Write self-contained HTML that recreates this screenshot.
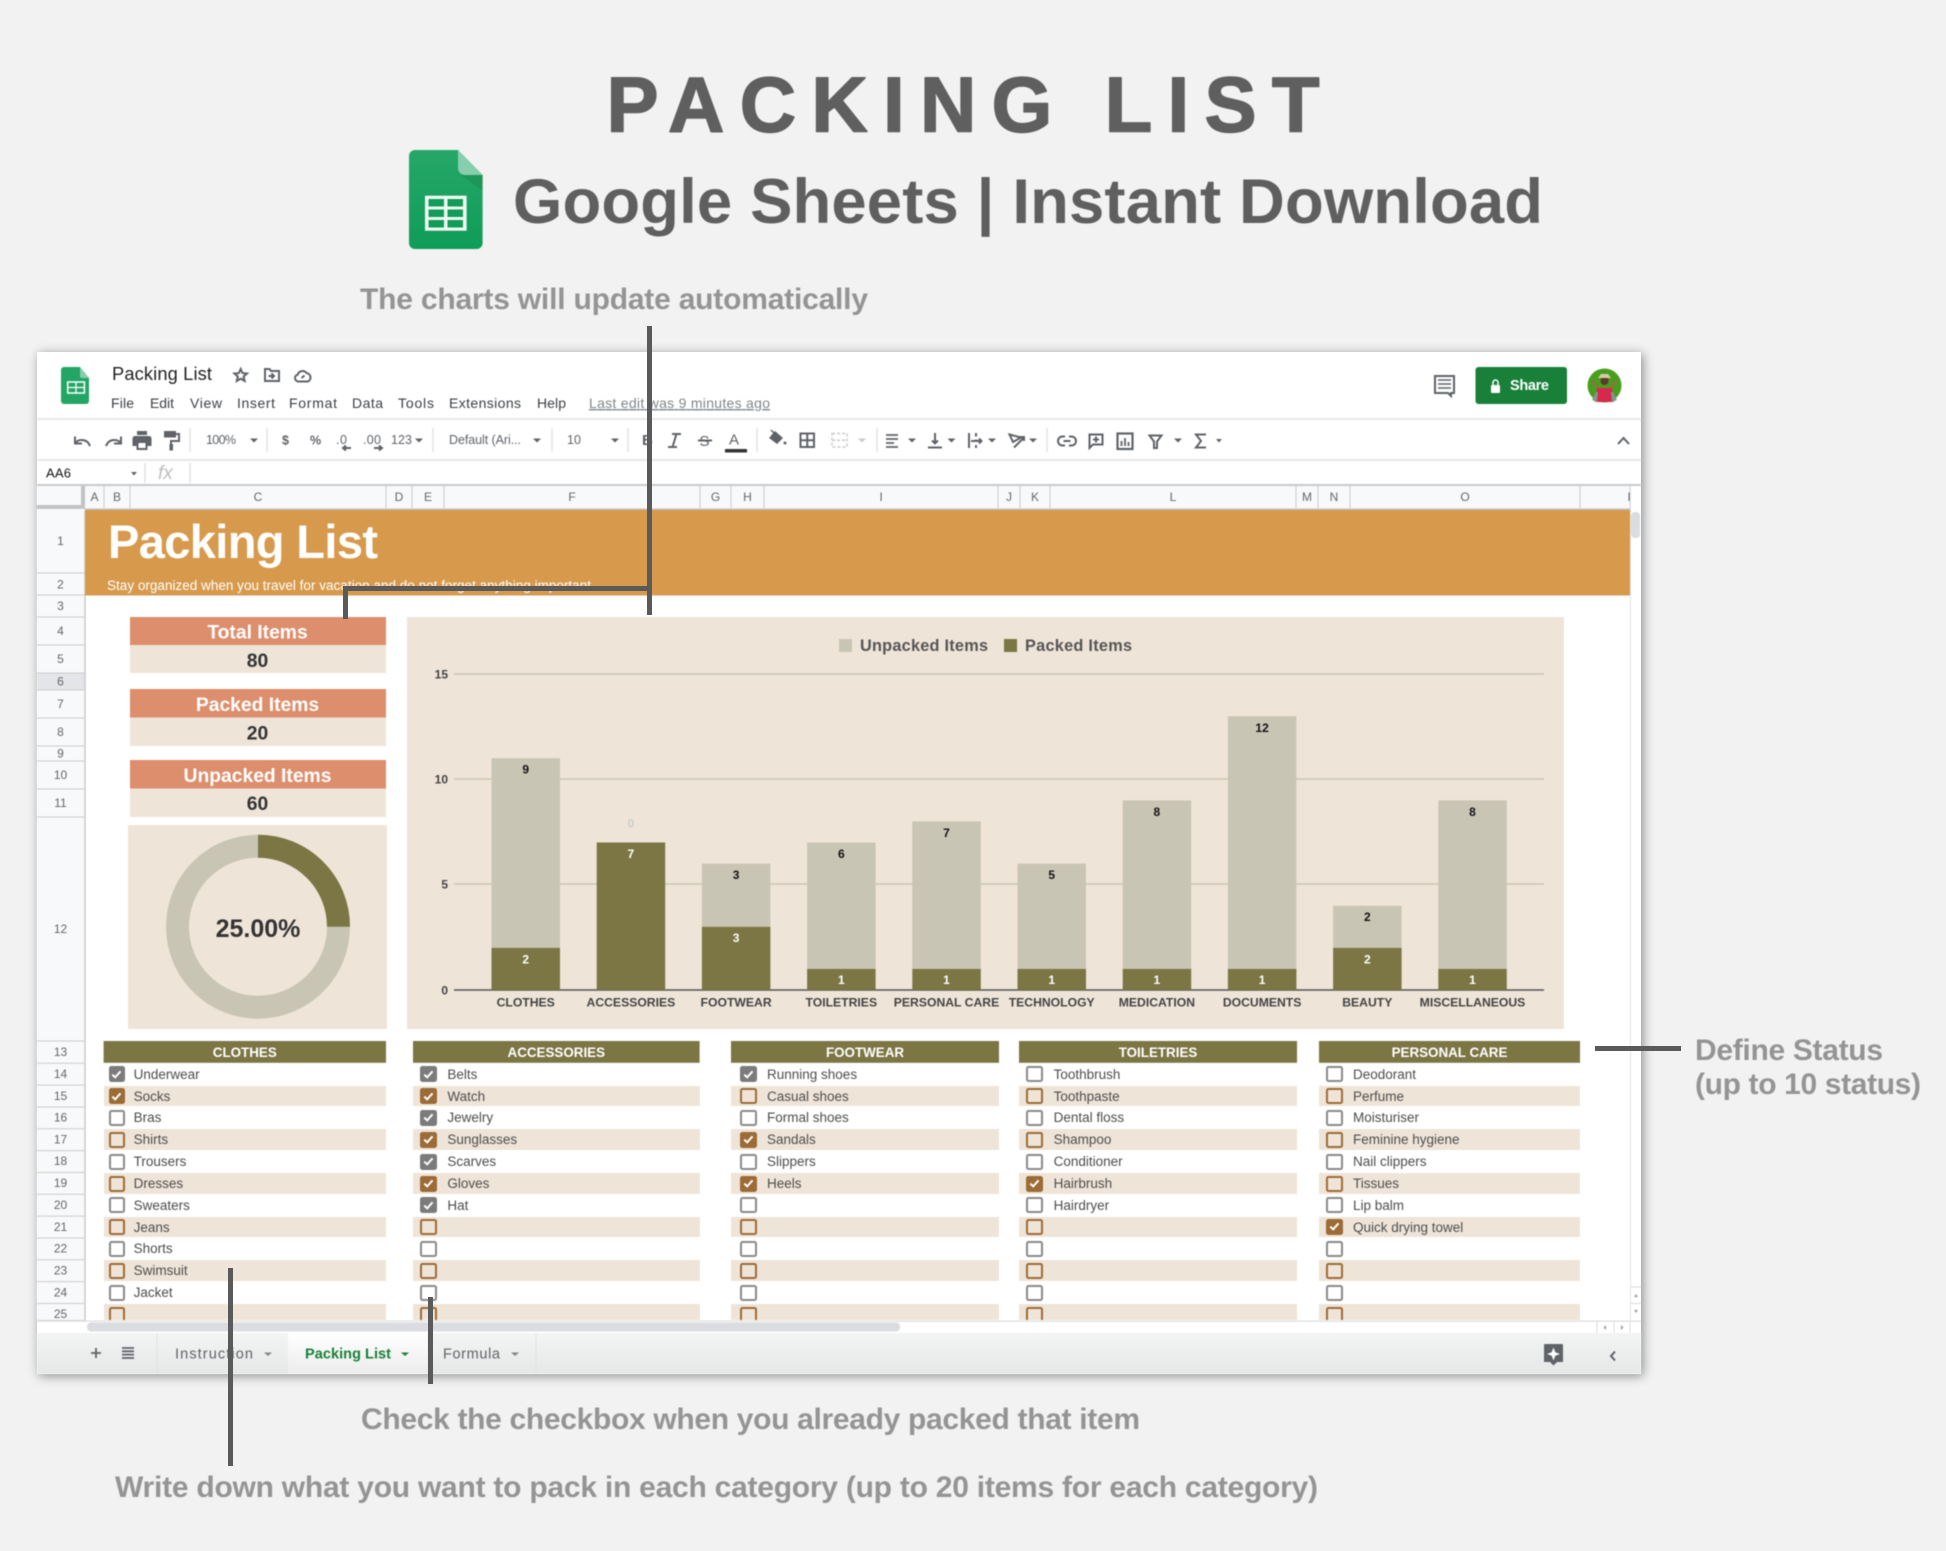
<!DOCTYPE html>
<html lang="en"><head><meta charset="utf-8"><title>Packing List</title>
<style>
html,body{margin:0;padding:0}
body{width:1946px;height:1551px;background:#f2f2f2;position:relative;overflow:hidden;font-family:"Liberation Sans",sans-serif}
#w{position:absolute;left:37px;top:352px;width:1604px;height:1022px;background:#fff;box-shadow:2px 2px 10px rgba(0,0,0,.42)}
#s{position:absolute;left:0;top:0;filter:blur(.45px)}
text{font-family:"Liberation Sans",sans-serif}
.t{font-size:14px;fill:#3c4043}
.h{font-size:12px;fill:#666;text-anchor:middle}
.tb{font-size:12.5px;fill:#5f6368}
.b{font-size:12px;font-weight:bold;text-anchor:middle}
.x{font-size:12.2px;font-weight:bold;fill:#444;text-anchor:middle}
.an{font-size:30px;font-weight:bold;fill:#949494}
.ic{fill:none;stroke:#5f6368;stroke-width:2}
.f{fill:#5f6368}
.l{position:absolute;top:1063.8px;height:256.7px;overflow:hidden;font-size:13.5px;color:#4d4d4d;filter:blur(.4px)}
.l div{height:21.83px;box-sizing:border-box;line-height:22.6px;position:relative;padding-left:var(--t);white-space:nowrap}
.l div:nth-child(even){background:#efe4d8;border-bottom:1px solid #fff}
.l i{position:absolute;left:var(--c);top:2.6px;width:16.5px;height:16px;box-sizing:border-box;border:2px solid #8a8a8a;border-radius:2.5px;background:#fff}
.l div:nth-child(even) i{border-color:#9c6b36;background:transparent}
.l i.k{background:#7b7b7b;border-color:#7b7b7b}
.l div:nth-child(even) i.k{background:#9c6b36}
.l i.k::after{content:"";position:absolute;left:3.7px;top:.3px;width:4.5px;height:9px;box-sizing:border-box;border:solid #fff;border-width:0 2px 2px 0;transform:rotate(42deg)}
.a{position:absolute;background:#5a5a5a;z-index:5}
</style></head><body>
<div id="w"></div>
<svg id="s" width="1946" height="1551" viewBox="0 0 1946 1551">
<defs>
<linearGradient id="g1" x1="0" y1="0" x2="0" y2="1"><stop offset="0" stop-color="#26a768"/><stop offset="1" stop-color="#0f9d58"/></linearGradient>
<linearGradient id="g2" x1="0" y1="0" x2="0" y2="1"><stop offset="0" stop-color="#f3f4f4"/><stop offset="1" stop-color="#e6e7e7"/></linearGradient>
<linearGradient id="g3" x1="0" y1="0" x2="0" y2="1"><stop offset="0" stop-color="#fff"/><stop offset="1" stop-color="#ececec"/></linearGradient>
</defs>

<!-- headline -->
<text x="606.500" y="131.500" font-size="78" font-weight="bold" fill="#5f5f5f" stroke="#5f5f5f" stroke-width="1.500" stroke-linejoin="round" textLength="713" lengthAdjust="spacing">PACKING LIST</text>
<text x="513" y="223" font-size="63.400" font-weight="bold" fill="#5f5f5f" textLength="1030" lengthAdjust="spacing">Google Sheets | Instant Download</text>
<!-- big logo -->
<path d="M415 150H458L482.600 175V243a6 6 0 0 1-6 6H415a6 6 0 0 1-6-6V156a6 6 0 0 1 6-6z" fill="url(#g1)"/>
<path d="M458 150L482.600 175H465a7 7 0 0 1-7-7z" fill="#87ceac"/>
<path d="M460 175H482.600V190z" fill="#1c8e52" opacity=".6"/>
<rect x="425" y="195.700" width="41.600" height="35" fill="#f1f8f4"/>
<g fill="#0f9d58"><rect x="428.500" y="199" width="15.500" height="7.500"/><rect x="447.500" y="199" width="15.500" height="7.500"/><rect x="428.500" y="209.500" width="15.500" height="7.500"/><rect x="447.500" y="209.500" width="15.500" height="7.500"/><rect x="428.500" y="220" width="15.500" height="7.500"/><rect x="447.500" y="220" width="15.500" height="7.500"/></g>

<text class="an" x="360" y="309" textLength="508" lengthAdjust="spacing">The charts will update automatically</text>
<text class="an" x="361" y="1429" textLength="779" lengthAdjust="spacing">Check the checkbox when you already packed that item</text>
<text class="an" x="115" y="1497" textLength="1203" lengthAdjust="spacing">Write down what you want to pack in each category (up to 20 items for each category)</text>
<text class="an" x="1695" y="1060" textLength="188" lengthAdjust="spacing">Define Status</text>
<text class="an" x="1695" y="1094" textLength="226" lengthAdjust="spacing">(up to 10 status)</text>

<!-- title bar -->
<path d="M64 367H80L89 378V401a3 3 0 0 1-3 3H64a3 3 0 0 1-3-3V370a3 3 0 0 1 3-3z" fill="#23a566"/>
<path d="M80 367L89 378H82a2 2 0 0 1-2-2z" fill="#87ceac"/>
<rect x="67.700" y="382" width="16.700" height="11" fill="none" stroke="#fff" stroke-width="1.500"/>
<path d="M76 382v11M67.700 387.500h16.700" stroke="#fff" stroke-width="1.300"/>
<text x="112" y="380" font-size="18.300" fill="#202124" textLength="100" lengthAdjust="spacing">Packing List</text>
<path d="M240.700 369l1.800 4.100 4.500.400-3.400 3 1 4.400-3.900-2.300-3.900 2.300 1-4.400-3.400-3 4.500-.400z" class="ic" stroke-width="1.300"/>
<path d="M265 369h4.500l1.500 2h8v10h-14z" class="ic" stroke-width="1.500"/><path d="M268.500 376h5.500M271.500 373.500l2.500 2.500-2.500 2.500" class="ic" stroke-width="1.300"/>
<path d="M298.500 381.500a3.500 3.500 0 0 1-.8-6.900 5 5 0 0 1 8.800-1.600 4.500 4.500 0 0 1 1.500 8.500z" class="ic" stroke-width="1.500"/><path d="M301.500 378l3-2.500" class="ic" stroke-width="1.200"/>
<g class="t">
<text class="t" x="111" y="408" textLength="23">File</text>
<text class="t" x="150" y="408" textLength="24">Edit</text>
<text class="t" x="190" y="408" textLength="32">View</text>
<text class="t" x="237" y="408" textLength="38">Insert</text>
<text class="t" x="289" y="408" textLength="48">Format</text>
<text class="t" x="352" y="408" textLength="31">Data</text>
<text class="t" x="398" y="408" textLength="36">Tools</text>
<text class="t" x="449" y="408" textLength="72">Extensions</text>
<text class="t" x="537" y="408" textLength="29">Help</text>
</g>
<text x="589" y="408" font-size="14" fill="#80868b" textLength="181" text-decoration="underline">Last edit was 9 minutes ago</text>

<!-- top right -->
<path d="M1435 376h19v17h-3v3l-3-3h-13z" fill="#fff" stroke="#5f6368" stroke-width="2"/>
<path d="M1438 380h13M1438 384h13M1438 388h13" stroke="#5f6368" stroke-width="1.500"/>
<rect x="1475.500" y="367" width="91.500" height="37" rx="3" fill="#188038"/>
<rect x="1491" y="385" width="9" height="8" rx="1" fill="#fff"/><path d="M1493 385v-2.500a2.500 2.500 0 0 1 5 0v2.500" fill="none" stroke="#fff" stroke-width="1.500"/>
<text x="1510" y="390" font-size="14.500" font-weight="bold" fill="#fff" textLength="39">Share</text>
<circle cx="1604.500" cy="385.500" r="17" fill="#4a9e1f"/>
<path d="M1598 388l-6-8M1611 388l6-8" stroke="#9b6a4a" stroke-width="2"/>
<path d="M1597 388h15l2 14h-19z" fill="#d9274f"/>
<path d="M1592 400l4-8h2l-1 10zM1617 400l-4-8h-2l1 10z" fill="#7f9a8a"/>
<circle cx="1604.500" cy="381" r="4" fill="#5a3a2a"/><path d="M1598 378h13l-3-4h-7z" fill="#d8c9a8"/>

<!-- bars/separators -->
<rect x="37" y="418" width="1604" height="2" fill="#e6e7e8"/>
<rect x="37" y="459" width="1604" height="2" fill="#e6e7e8"/>
<rect x="37" y="484" width="1604" height="2" fill="#c8c9cb"/>
<g stroke="#e3e4e6" stroke-width="1.500"><path d="M190 428v24M267 428v24M433 428v24M552 428v24M628 428v24M757 428v24M877 428v24M1047 428v24"/></g>

<!-- toolbar left -->
<path d="M90 446c-1.500-4-4.500-6-8.500-6-2.500 0-4.500 1-6 2.500" class="ic" stroke-width="2.400"/><path d="M75 436.500v7h7" class="ic" stroke-width="2.400"/>
<path d="M106 446c1.500-4 4.500-6 8.500-6 2.500 0 4.500 1 6 2.500" class="ic" stroke-width="2.400"/><path d="M121 436.500v7h-7" class="ic" stroke-width="2.400"/>
<path d="M137 431h10v4h-10zM135 436h14a2.500 2.500 0 0 1 2.500 2.500v7.500h-4v4h-11v-4h-4v-7.500a2.500 2.500 0 0 1 2.500-2.500z" class="f"/><rect x="138.500" y="443" width="7" height="5" fill="#fff"/>
<path d="M164 431h12v6.500h-12z" class="f"/><path d="M176 434h3v7h-8v3" class="ic"/><rect x="169.500" y="444" width="3.500" height="6.500" class="f"/>
<text class="tb" x="206" y="444" textLength="30">100%</text>
<path d="M250 438.500h8l-4 4z" class="f"/>
<text class="tb" x="282" y="444.500" font-weight="bold">$</text>
<text class="tb" x="310" y="444.500" font-weight="bold" font-size="11.500">%</text>
<text class="tb" x="336" y="444" textLength="11">.0</text><path d="M351 448h-8M346 445.500l-3 2.500 3 2.500" class="ic" stroke-width="1.300"/>
<text class="tb" x="363" y="444" textLength="18">.00</text><path d="M374 448h8M379 445.500l3 2.500-3 2.500" class="ic" stroke-width="1.300"/>
<text class="tb" x="391" y="444" textLength="21">123</text><path d="M415 438.500h8l-4 4z" class="f"/>
<text class="tb" x="449" y="444" textLength="72">Default (Ari...</text><path d="M533 438.500h8l-4 4z" class="f"/>
<text class="tb" x="567" y="444" textLength="14">10</text><path d="M611 438.500h8l-4 4z" class="f"/>
<text x="642" y="445" font-size="15" font-weight="bold" fill="#5f6368">B</text>
<path d="M672 434h9M668 447h9M676.500 434l-4 13" class="ic" stroke-width="1.800"/>
<path d="M698 440.500h14" class="ic" stroke-width="1.500"/>
<text x="699.500" y="446" font-size="15" fill="#5f6368">S</text>
<text x="729" y="444.500" font-size="15" fill="#5f6368">A</text><rect x="725" y="449" width="22" height="3.500" fill="#333"/>
<path d="M775 431l8 7-6 6-8-6zM770 438h12" fill="#5f6368"/><path d="M771 430l3 3" stroke="#5f6368" stroke-width="1.500"/><circle cx="785" cy="443" r="1.500" fill="#5f6368"/>
<rect x="800.500" y="433.500" width="13.500" height="13.500" class="ic"/><path d="M807.250 433.500v13.500M800.500 440.250h13.500" class="ic"/>
<rect x="832" y="433.500" width="15" height="13.500" fill="none" stroke="#c9cbce" stroke-width="1.500" stroke-dasharray="3 2"/><path d="M832 440.250h15" stroke="#c9cbce" stroke-width="1.500" stroke-dasharray="3 2"/>
<path d="M858 438.500h8l-4 4z" fill="#c9cbce"/>
<path d="M886 435h12M886 439h12M886 443h8M886 447h12" stroke="#5f6368" stroke-width="1.800"/><path d="M908 438.500h8l-4 4z" class="f"/>
<path d="M935 433v10M932 440.500l3 3 3-3M928 447.500h14" class="ic" stroke-width="1.700"/><path d="M947.500 438.500h8l-4 4z" class="f"/>
<path d="M969 433v15M976 433v3.500M976 439.500v2M976 445v3M971 441h10M979 438.500l2.500 2.500-2.500 2.500" class="ic" stroke-width="1.500"/><path d="M988 438.500h8l-4 4z" class="f"/>
<path d="M1009.500 434.500l11.500 3-8 4.500zM1014 447.500l10-10M1024 441v-4h-4" class="ic" stroke-width="1.500"/><path d="M1029 438.500h8l-4 4z" class="f"/>
<!-- toolbar right -->
<path d="M1065 436.500h-2.500a4.500 4.500 0 0 0 0 9h2.500M1069 436.500h2.500a4.500 4.500 0 0 1 0 9h-2.500M1063.500 441h7" class="ic" stroke-width="1.900"/>
<path d="M1089.500 434.500h13v10h-9.500l-3.500 3.500zM1096 436.500v6M1093 439.500h6" class="ic" stroke-width="1.400"/>
<rect x="1117.500" y="433.500" width="15" height="15.500" fill="none" stroke="#5f6368" stroke-width="2.200"/><path d="M1121.500 441v5M1125 438v8M1128.500 442v4" stroke="#5f6368" stroke-width="1.800"/>
<path d="M1149.500 435.500h12l-4.500 6v6.500h-3v-6.500z" class="ic" stroke-width="1.500"/><path d="M1174 438.500h8l-4 4z" class="f"/>
<path d="M1206 434.500h-10l5 6.500-5 6.500h10" class="ic" stroke-width="1.800"/><path d="M1216 439h6l-3 3.500z" class="f"/>
<path d="M1618 444l5.500-6 5.500 6" class="ic" stroke-width="2"/>

<!-- formula bar -->
<text x="46" y="477.500" font-size="13" fill="#111" textLength="25">AA6</text>
<path d="M131 472h6l-3 3.500z" class="f"/>
<path d="M145 463v20M190 463v20" stroke="#dfe0e2" stroke-width="1.500"/>
<text x="158" y="479" font-size="19" font-style="italic" font-family="Liberation Serif" fill="#bdbdbd">fx</text>

<!-- column header -->
<rect x="37" y="486" width="1593" height="23.500" fill="#f8f9fa"/>
<rect x="81" y="486" width="4" height="24" fill="#c2c3c5"/>
<rect x="37" y="505" width="48" height="4" fill="#c2c3c5"/>
<rect x="37" y="509" width="48" height="2" fill="#fff"/>
<rect x="85" y="508.500" width="1545" height="1.500" fill="#c0c0c0"/>
<path d="M104 486v23M130 486v23M386 486v23M412 486v23M444 486v23M700 486v23M731 486v23M764 486v23M998 486v23M1020 486v23M1050 486v23M1296 486v23M1318 486v23M1350 486v23M1580 486v23M1630 486v23" stroke="#ccc" stroke-width="1"/>
<g>
<text class="h" x="94.500" y="501">A</text><text class="h" x="117" y="501">B</text><text class="h" x="258" y="501">C</text><text class="h" x="399" y="501">D</text><text class="h" x="428" y="501">E</text><text class="h" x="572" y="501">F</text><text class="h" x="715.500" y="501">G</text><text class="h" x="747.500" y="501">H</text><text class="h" x="881" y="501">I</text><text class="h" x="1009" y="501">J</text><text class="h" x="1035" y="501">K</text><text class="h" x="1173" y="501">L</text><text class="h" x="1307" y="501">M</text><text class="h" x="1334" y="501">N</text><text class="h" x="1465" y="501">O</text><text class="h" x="1629" y="501">I</text>
</g>

<!-- row header -->
<rect x="37" y="510" width="48" height="811" fill="#f8f9fa"/>
<rect x="37" y="673" width="48" height="17" fill="#e3e5e8"/>
<path d="M85 510v811" stroke="#ccc" stroke-width="1.500"/>
<path d="M37 573h48M37 595h48M37 617h48M37 645h48M37 673h48M37 690h48M37 718h48M37 746h48M37 761h48M37 789h48M37 817h48M37 1041h48M37 1063.300h48M37 1085.100h48M37 1107h48M37 1128.800h48M37 1150.600h48M37 1172.500h48M37 1194.300h48M37 1216.100h48M37 1238h48M37 1259.800h48M37 1281.600h48M37 1303.500h48M37 1320.500h48" stroke="#ccc" stroke-width="1"/>
<g>
<text class="h" x="60.500" y="545">1</text><text class="h" x="60.500" y="588.500">2</text><text class="h" x="60.500" y="610">3</text><text class="h" x="60.500" y="635">4</text><text class="h" x="60.500" y="663">5</text><text class="h" x="60.500" y="685.500">6</text><text class="h" x="60.500" y="708">7</text><text class="h" x="60.500" y="736">8</text><text class="h" x="60.500" y="757.500">9</text><text class="h" x="60.500" y="779">10</text><text class="h" x="60.500" y="807">11</text><text class="h" x="60.500" y="933">12</text><text class="h" x="60.500" y="1056">13</text><text class="h" x="60.500" y="1078">14</text><text class="h" x="60.500" y="1100">15</text><text class="h" x="60.500" y="1121.500">16</text><text class="h" x="60.500" y="1143.500">17</text><text class="h" x="60.500" y="1165">18</text><text class="h" x="60.500" y="1187">19</text><text class="h" x="60.500" y="1209">20</text><text class="h" x="60.500" y="1231">21</text><text class="h" x="60.500" y="1252.500">22</text><text class="h" x="60.500" y="1274.500">23</text><text class="h" x="60.500" y="1296.500">24</text><text class="h" x="60.500" y="1318">25</text>
</g>

<!-- orange banner -->
<rect x="85" y="510" width="1545" height="85.500" fill="#d79a4c"/>
<text x="108" y="558" font-size="47" font-weight="bold" fill="#fff" textLength="270" lengthAdjust="spacing">Packing List</text>
<text x="107" y="590" font-size="13.500" fill="#fff" textLength="484" lengthAdjust="spacing">Stay organized when you travel for vacation and do not forget anything important</text>

<!-- stats -->
<rect x="130" y="617" width="256" height="28" fill="#dd8e6c"/><rect x="130" y="645" width="256" height="28" fill="#efe4d8"/>
<rect x="130" y="689" width="256" height="28.500" fill="#dd8e6c"/><rect x="130" y="717.500" width="256" height="28.500" fill="#efe4d8"/>
<rect x="130" y="760" width="256" height="28.500" fill="#dd8e6c"/><rect x="130" y="788.500" width="256" height="28.500" fill="#efe4d8"/>
<g font-size="19.300" font-weight="bold" text-anchor="middle">
<text x="257.500" y="638.500" fill="#fff">Total Items</text><text x="257.500" y="667" fill="#333">80</text>
<text x="257.500" y="711" fill="#fff">Packed Items</text><text x="257.500" y="739.500" fill="#333">20</text>
<text x="257.500" y="782" fill="#fff">Unpacked Items</text><text x="257.500" y="810" fill="#333">60</text>
</g>
<rect x="128" y="825" width="259" height="204" fill="#efe4d8"/>
<circle cx="258" cy="926.700" r="80.500" fill="none" stroke="#c9c5b5" stroke-width="23"/>
<path d="M258 846.200A80.500 80.500 0 0 1 338.500 926.700" fill="none" stroke="#7c7644" stroke-width="23"/>
<text x="258" y="937" font-size="25" font-weight="bold" fill="#333" text-anchor="middle">25.00%</text>

<!-- chart -->
<rect x="407" y="617" width="1157" height="412" fill="#efe4d8"/>
<path d="M454 674h1090M454 779h1090M454 884h1090" stroke="#c9c5b5" stroke-width="1.500"/>
<path d="M454 990h1090" stroke="#555" stroke-width="1.500"/>
<g font-size="12" font-weight="bold" fill="#444" text-anchor="end"><text x="448" y="678.500">15</text><text x="448" y="783.500">10</text><text x="448" y="888.500">5</text><text x="448" y="994.500">0</text></g>
<rect x="839" y="639" width="13" height="13" fill="#c9c5b5"/><text x="860" y="651" font-size="16.300" font-weight="bold" fill="#555" textLength="128">Unpacked Items</text>
<rect x="1004" y="639" width="13" height="13" fill="#7c7644"/><text x="1025" y="651" font-size="16.300" font-weight="bold" fill="#555" textLength="107">Packed Items</text>
<g fill="#c9c5b5">
<rect x="491.500" y="758.200" width="68.500" height="189.700"/><rect x="701.900" y="863.600" width="68.500" height="63.200"/><rect x="807.100" y="842.500" width="68.500" height="126.400"/><rect x="912.300" y="821.400" width="68.500" height="147.500"/><rect x="1017.500" y="863.600" width="68.500" height="105.300"/><rect x="1122.700" y="800.400" width="68.500" height="168.500"/><rect x="1227.900" y="716.200" width="68.500" height="252.700"/><rect x="1333.100" y="905.800" width="68.500" height="42.100"/><rect x="1438.300" y="800.400" width="68.500" height="168.500"/>
</g>
<g fill="#7c7644">
<rect x="491.500" y="947.900" width="68.500" height="42.100"/><rect x="596.700" y="842.500" width="68.500" height="147.500"/><rect x="701.900" y="926.800" width="68.500" height="63.200"/><rect x="807.100" y="968.900" width="68.500" height="21.100"/><rect x="912.300" y="968.900" width="68.500" height="21.100"/><rect x="1017.500" y="968.900" width="68.500" height="21.100"/><rect x="1122.700" y="968.900" width="68.500" height="21.100"/><rect x="1227.900" y="968.900" width="68.500" height="21.100"/><rect x="1333.100" y="947.900" width="68.500" height="42.100"/><rect x="1438.300" y="968.900" width="68.500" height="21.100"/>
</g>
<g fill="#111">
<text class="b" x="525.700" y="773.500">9</text><text class="b" x="736.100" y="879">3</text><text class="b" x="841.300" y="858">6</text><text class="b" x="946.500" y="837">7</text><text class="b" x="1051.700" y="879">5</text><text class="b" x="1156.900" y="816">8</text><text class="b" x="1262.100" y="732">12</text><text class="b" x="1367.300" y="921">2</text><text class="b" x="1472.500" y="816">8</text>
</g>
<text class="b" x="630.900" y="827.500" fill="#ccc">0</text>
<g fill="#fff">
<text class="b" x="525.700" y="963.500">2</text><text class="b" x="630.900" y="858">7</text><text class="b" x="736.100" y="942">3</text><text class="b" x="841.300" y="984">1</text><text class="b" x="946.500" y="984">1</text><text class="b" x="1051.700" y="984">1</text><text class="b" x="1156.900" y="984">1</text><text class="b" x="1262.100" y="984">1</text><text class="b" x="1367.300" y="963.500">2</text><text class="b" x="1472.500" y="984">1</text>
</g>
<g>
<text class="x" x="525.700" y="1006.500">CLOTHES</text><text class="x" x="630.900" y="1006.500">ACCESSORIES</text><text class="x" x="736.100" y="1006.500">FOOTWEAR</text><text class="x" x="841.300" y="1006.500">TOILETRIES</text><text class="x" x="946.500" y="1006.500">PERSONAL CARE</text><text class="x" x="1051.700" y="1006.500">TECHNOLOGY</text><text class="x" x="1156.900" y="1006.500">MEDICATION</text><text class="x" x="1262.100" y="1006.500">DOCUMENTS</text><text class="x" x="1367.300" y="1006.500">BEAUTY</text><text class="x" x="1472.500" y="1006.500">MISCELLANEOUS</text>
</g>

<!-- list headers -->
<g fill="#7c7644"><rect x="103.600" y="1041" width="282.400" height="21.800"/><rect x="413" y="1041" width="286.600" height="21.800"/><rect x="731" y="1041" width="268" height="21.800"/><rect x="1019" y="1041" width="278" height="21.800"/><rect x="1319" y="1041" width="261" height="21.800"/></g>
<g font-size="13.400" font-weight="bold" fill="#fff" text-anchor="middle">
<text x="244.800" y="1057">CLOTHES</text><text x="556.300" y="1057">ACCESSORIES</text><text x="865" y="1057">FOOTWEAR</text><text x="1158" y="1057">TOILETRIES</text><text x="1449.500" y="1057">PERSONAL CARE</text>
</g>

<!-- right scrollbar -->
<path d="M1630.500 486v835" stroke="#e3e4e6" stroke-width="1"/>
<rect x="1631" y="512" width="9" height="26" rx="4" fill="#dadce0"/>
<path d="M1631 1287h10M1631 1303.500h10" stroke="#d8d9db"/>
<path d="M1634 1297l2-3 2 3zM1634 1310l2 3 2-3z" fill="#9a9a9a"/>

<!-- bottom -->
<rect x="37" y="1320.500" width="1604" height="1.200" fill="#dcdcdc"/>
<rect x="87" y="1322.500" width="813" height="9" rx="4" fill="#dadce0"/>
<path d="M1597 1322v11M1614 1322v11M1630 1322v11" stroke="#dcdcdc"/>
<path d="M1606 1325l-2.500 2.500 2.500 2.500zM1621 1325l2.500 2.500-2.500 2.500z" fill="#9a9a9a"/>
<rect x="37" y="1333" width="1604" height="41" fill="url(#g2)"/>
<rect x="288" y="1333" width="139" height="41" fill="url(#g3)"/>
<path d="M157 1334v40M536 1334v40" stroke="#e0e1e2" stroke-width="1"/>
<path d="M91 1353h10M96 1348v10" stroke="#5f6368" stroke-width="1.800"/>
<path d="M122 1348h12M122 1351.300h12M122 1354.600h12M122 1358h12" stroke="#5f6368" stroke-width="1.800"/>
<text x="175" y="1358.500" font-size="14.500" fill="#5f6368" textLength="78" lengthAdjust="spacing">Instruction</text>
<path d="M264 1352.500h8l-4 3.500z" fill="#80868b"/>
<text x="305" y="1358.500" font-size="14.500" font-weight="bold" fill="#188038" textLength="86" lengthAdjust="spacing">Packing List</text>
<path d="M401 1352.500h8l-4 3.500z" fill="#188038"/>
<text x="443" y="1358.500" font-size="14.500" fill="#5f6368" textLength="57" lengthAdjust="spacing">Formula</text>
<path d="M511 1352.500h8l-4 3.500z" fill="#80868b"/>
<path d="M1545 1344h17a1 1 0 0 1 1 1v17h-6l-3.500 3.500-3.500-3.500h-6v-17a1 1 0 0 1 1-1z" fill="#5f6368"/>
<path d="M1553.500 1347.500l1.800 4.700 4.700 1.800-4.700 1.800-1.800 4.700-1.800-4.700-4.700-1.800 4.700-1.800z" fill="#fff"/>
<path d="M1615 1351.500l-4 4.500 4 4.500" class="ic" stroke-width="1.700"/>
</svg>

<div class="l" style="left:103.600px;width:282.400px;--c:5px;--t:30px">
<div><i class="k"></i>Underwear</div><div><i class="k"></i>Socks</div><div><i></i>Bras</div><div><i></i>Shirts</div><div><i></i>Trousers</div><div><i></i>Dresses</div><div><i></i>Sweaters</div><div><i></i>Jeans</div><div><i></i>Shorts</div><div><i></i>Swimsuit</div><div><i></i>Jacket</div><div><i></i></div>
</div>
<div class="l" style="left:413px;width:286.600px;--c:7px;--t:34.400px">
<div><i class="k"></i>Belts</div><div><i class="k"></i>Watch</div><div><i class="k"></i>Jewelry</div><div><i class="k"></i>Sunglasses</div><div><i class="k"></i>Scarves</div><div><i class="k"></i>Gloves</div><div><i class="k"></i>Hat</div><div><i></i></div><div><i></i></div><div><i></i></div><div><i></i></div><div><i></i></div>
</div>
<div class="l" style="left:731px;width:268px;--c:9px;--t:36px">
<div><i class="k"></i>Running shoes</div><div><i></i>Casual shoes</div><div><i></i>Formal shoes</div><div><i class="k"></i>Sandals</div><div><i></i>Slippers</div><div><i class="k"></i>Heels</div><div><i></i></div><div><i></i></div><div><i></i></div><div><i></i></div><div><i></i></div><div><i></i></div>
</div>
<div class="l" style="left:1019px;width:278px;--c:7px;--t:34.600px">
<div><i></i>Toothbrush</div><div><i></i>Toothpaste</div><div><i></i>Dental floss</div><div><i></i>Shampoo</div><div><i></i>Conditioner</div><div><i class="k"></i>Hairbrush</div><div><i></i>Hairdryer</div><div><i></i></div><div><i></i></div><div><i></i></div><div><i></i></div><div><i></i></div>
</div>
<div class="l" style="left:1319px;width:261px;--c:7px;--t:34px">
<div><i></i>Deodorant</div><div><i></i>Perfume</div><div><i></i>Moisturiser</div><div><i></i>Feminine hygiene</div><div><i></i>Nail clippers</div><div><i></i>Tissues</div><div><i></i>Lip balm</div><div><i class="k"></i>Quick drying towel</div><div><i></i></div><div><i></i></div><div><i></i></div><div><i></i></div>
</div>

<!-- annotation lines -->
<div class="a" style="left:647px;top:326px;width:5px;height:289px"></div>
<div class="a" style="left:343px;top:586px;width:309px;height:4.500px"></div>
<div class="a" style="left:343px;top:586px;width:5px;height:33px"></div>
<div class="a" style="left:1594.600px;top:1045.500px;width:86.400px;height:5px"></div>
<div class="a" style="left:227.500px;top:1268px;width:5px;height:198px"></div>
<div class="a" style="left:428px;top:1297px;width:5px;height:87px"></div>
</body></html>
